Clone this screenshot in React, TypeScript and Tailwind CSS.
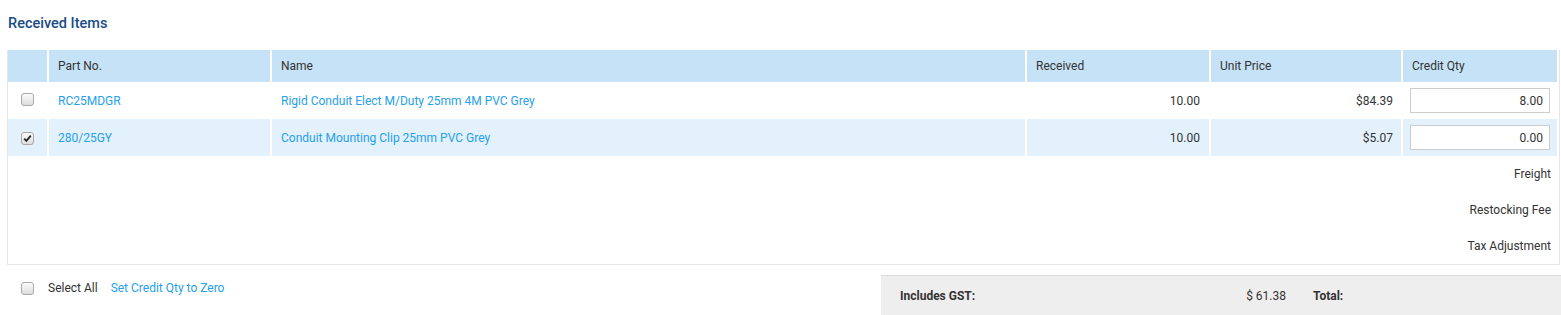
import React from 'react';

interface LineItem {
  partNo: string;
  name: string;
  received: string;
  unitPrice: string;
  creditQty: string;
  checked: boolean;
}

const ITEMS: LineItem[] = [
  {
    partNo: 'RC25MDGR',
    name: 'Rigid Conduit Elect M/Duty 25mm 4M PVC Grey',
    received: '10.00',
    unitPrice: '$84.39',
    creditQty: '8.00',
    checked: false,
  },
  {
    partNo: '280/25GY',
    name: 'Conduit Mounting Clip 25mm PVC Grey',
    received: '10.00',
    unitPrice: '$5.07',
    creditQty: '0.00',
    checked: true,
  },
];

const ADJUSTMENTS = ['Freight', 'Restocking Fee', 'Tax Adjustment'];

// Old-style grey checkbox, as the page renders it
const Checkbox: React.FC<{ checked?: boolean }> = ({ checked }) => (
  <span className="inline-flex h-[13px] w-[13px] items-center justify-center rounded-[3px] border border-[#a9a9a9] bg-linear-to-b from-[#fcfcfc] to-[#dcdcdc]">
    {checked && (
      <svg width="9" height="9" viewBox="0 0 9 9">
        <path d="M1.2 4.6 L3.4 6.9 L7.8 1.6" fill="none" stroke="#2b2b2b" strokeWidth="1.9" />
      </svg>
    )}
  </span>
);

const headCell = 'h-[32px] border-r-2 border-white bg-[#c6e2f6] px-[9px] text-left font-normal text-[#333]';

export default function App() {
  return (
    <div className="min-h-[315px] w-[1561px] bg-white font-['Roboto','Liberation_Sans',sans-serif] text-[12px] text-[#333]">
      <h2 className="pl-[8px] pt-[14px] text-[14.5px] leading-[20px] font-medium text-[#194c88]">Received Items</h2>

      <div className="ml-[7px] mt-[16px] w-[1553px] border-x border-b border-[#e6e6e6]">
        <table className="w-full table-fixed border-separate border-spacing-0">
          <colgroup>
            <col className="w-[41px]" />
            <col className="w-[223px]" />
            <col className="w-[755px]" />
            <col className="w-[184px]" />
            <col className="w-[192px]" />
            <col className="w-[156px]" />
          </colgroup>
          <thead>
            <tr>
              <th className={headCell}></th>
              <th className={headCell}>Part No.</th>
              <th className={headCell}>Name</th>
              <th className={headCell}>Received</th>
              <th className={headCell}>Unit Price</th>
              <th className={headCell}>Credit Qty</th>
            </tr>
          </thead>
          <tbody>
            {ITEMS.map((item, i) => (
              <tr key={item.partNo} className={i % 2 === 1 ? 'bg-[#e3f1fd]' : 'bg-white'}>
                <td className="h-[37px] border-r-2 border-white text-center">
                  <span className="relative top-[1px]">
                    <Checkbox checked={item.checked} />
                  </span>
                </td>
                <td className="border-r-2 border-white px-[9px] text-[#25a0eb]">{item.partNo}</td>
                <td className="border-r-2 border-white px-[9px] text-[#25a0eb]">{item.name}</td>
                <td className="border-r-2 border-white px-[9px] text-right">{item.received}</td>
                <td className="border-r-2 border-white pl-[9px] pr-[8px] text-right">{item.unitPrice}</td>
                <td className="border-r-2 border-white pl-[7px] pr-[8px]">
                  <input
                    readOnly
                    value={item.creditQty}
                    className="h-[25px] w-[140px] border border-[#cccccc] bg-white px-[6px] text-right text-[12px] text-[#333] outline-none"
                  />
                </td>
              </tr>
            ))}
          </tbody>
        </table>

        {/* Adjustment lines */}
        <div className="flex flex-col">
          {ADJUSTMENTS.map((label) => (
            <div key={label} className="flex h-[36px] items-center justify-end pr-[8px]">
              {label}
            </div>
          ))}
        </div>
      </div>

      <div className="mt-[10px] flex">
        <div className="flex h-[24px] flex-1 items-center pl-[21px] pt-[2px]">
          <Checkbox />
          <span className="ml-[14px]">Select All</span>
          <a className="ml-[13px] cursor-pointer text-[#25a0eb]">Set Credit Qty to Zero</a>
        </div>
        <div className="flex h-[40px] w-[680px] items-center border-t border-[#dcdcdc] bg-[#eeeeee]">
          <span className="flex-1 pl-[19px] font-bold">Includes GST:</span>
          <span>$ 61.38</span>
          <span className="w-[275px] pl-[27px] font-bold">Total:</span>
        </div>
      </div>
    </div>
  );
}
